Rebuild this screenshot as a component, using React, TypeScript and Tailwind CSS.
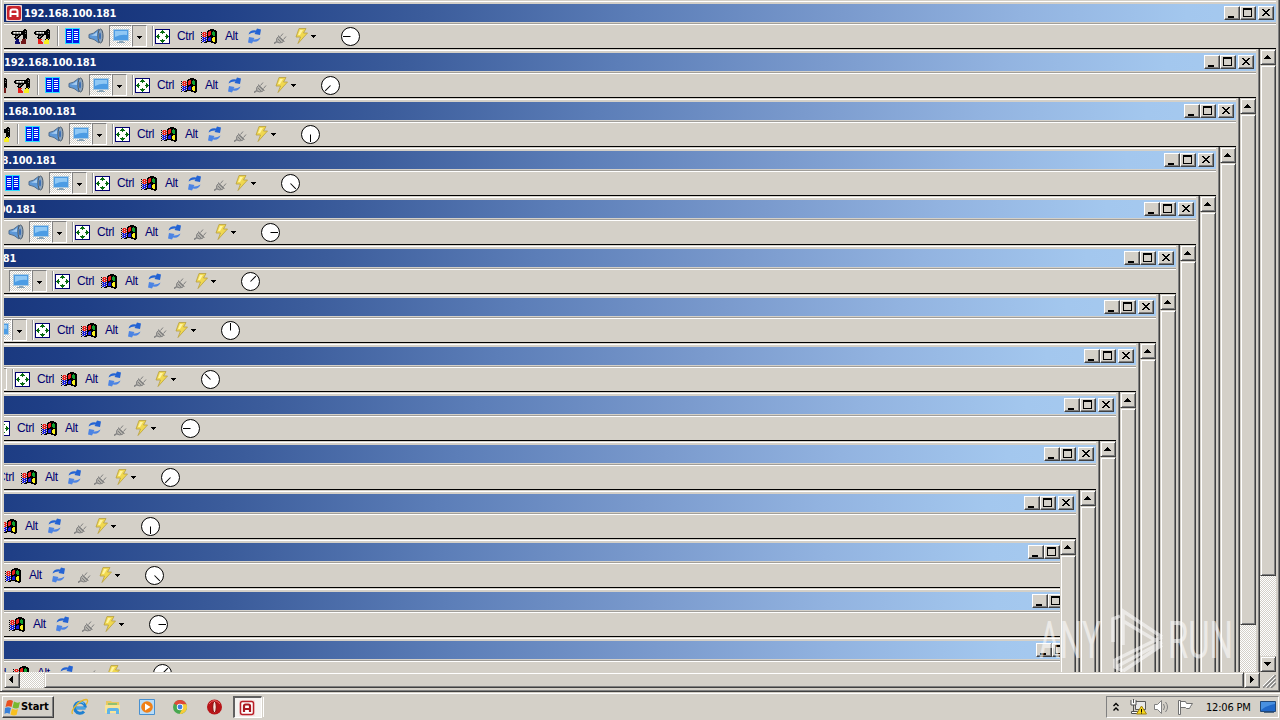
import type { ReactNode } from 'react';
import clsx from 'clsx';

const LAST_LEVEL = 13;
// how far each nested session is scrolled to the left
const SHIFTS = [0, 20, 40, 60, 80, 100, 120, 140, 160, 180, 200, 196, 192, 188];

const RAISED = 'bg-[#d4d0c8] border border-t-white border-l-white border-r-[#404040] border-b-[#404040] shadow-[inset_-1px_-1px_0_#808080]';
const SCROLL_RAISED = 'bg-[#d4d0c8] border border-t-[#d4d0c8] border-l-[#d4d0c8] border-r-[#404040] border-b-[#404040] shadow-[inset_1px_1px_0_#fff,inset_-1px_-1px_0_#808080]';
const DITHER = 'bg-[repeating-conic-gradient(#fff_0_25%,#d4d0c8_0_50%)] bg-[length:2px_2px]';

const PALETTE: Record<string, string> = {
  k: '#000000',
  g: '#808080',
  s: '#b8b8b0',
  w: '#ffffff',
  r: '#e8201c',
  m: '#701818',
  b: '#1418d8',
  n: '#101070',
  y: '#f8f020',
  G: '#10a030',
};

function Pixels({ rows, className }: { rows: string[]; className?: string }) {
  return (
    <svg width={rows[0].length} height={rows.length} shapeRendering="crispEdges" className={clsx('shrink-0', className)}>
      {rows.map((row, y) =>
        row.split('').map((c, x) =>
          c === '.' ? null : <rect key={`${x}-${y}`} x={x} y={y} width="1" height="1" fill={PALETTE[c]} />
        )
      )}
    </svg>
  );
}

const DRILL = [
  '.............kk.',
  '............kkkk',
  '.kkkkkkkkkkkkkgk',
  'kkswsswsswkkkkkk',
  'kkgsggsggskkkkgk',
  '.kkkkkkkkkkkkkkk',
  '....kkkgkk..kkkk',
  '....kggkk...kkkk',
  '...kkgkk....kkkk',
  '....kkk.....kkgk',
];

const DRILL_A = [...DRILL, '....nnnn...mmmm.', '.....nnn...mmmm.', '....nnnn..mmmmm.', '....nnnnn.mmmmm.', '....nnnnn.mmmmm.'];
const DRILL_B = [...DRILL, '....rrrr...kyyk.', '....rrr....yyyy.', '....rrrr..yyyyy.', '....rrrrr.yyyyy.', '....rrrrr.yyyyy.'];

const FLAG = [
  '.........kkkk...',
  '.......kkkkkkkk.',
  '......kkrrkkGkkk',
  'k.rrr.krrrkGGGkk',
  '.rr.rrkrrrkGGGkk',
  'k.rrr.krrrkGGGkk',
  '.rr.rrkrrkkkGGkk',
  'k.rrr.kkkkkkkkkk',
  '.bb.bbkkbbkkyykk',
  'k.bbb.kbbbkyyykk',
  '.bb.bbkbbbkyyykk',
  'k.bbb.kbbbkyyykk',
  '.bb.bkkkkkkkyykk',
  'k..kkk....kkkkkk',
  '.............kk.',
];

function DocsIcon() {
  return (
    <svg width="15" height="16" shapeRendering="crispEdges" className="shrink-0">
      <path fill="#2adcff" d="M0 0h15v16H0z" />
      <path fill="#0018e8" d="M1 1h6v14H1zM8 1h6v14H8z" />
      <path fill="#fff" d="M2 3h4v1H2zM2 5h4v1H2zM2 7h4v1H2zM2 9h4v1H2zM2 11h4v1H2zM9 3h4v1H9zM9 5h4v1H9zM9 7h4v1H9zM9 9h4v1H9zM9 11h4v1H9z" />
    </svg>
  );
}

function SpeakerIcon() {
  return (
    <svg width="16" height="16" className="shrink-0">
      <path d="M1 6.500Q5 6.500 11 1v14Q6 10.500 1 10z" fill="#5c98d8" stroke="#506c8c" />
      <path d="M3 7.500Q6 7 9 4v4z" fill="#a8cdf0" />
      <ellipse cx="12.500" cy="8" rx="2.500" ry="7" fill="#90a8c0" stroke="#485868" />
      <ellipse cx="12" cy="8" rx="1" ry="3.500" fill="#3a70b8" />
    </svg>
  );
}

function MonitorIcon() {
  return (
    <svg width="16" height="14">
      <rect x=".5" y=".5" width="15" height="11" fill="#4c9ce4" stroke="#a8c8e0" />
      <path d="M2 2h12v4Q8 5 2 8z" fill="#90c8f4" />
      <path d="M6 12h4v1H6zM4 13h8v1H4z" fill="#88a4b8" />
    </svg>
  );
}

function MoveIcon() {
  return (
    <svg width="15" height="15" shapeRendering="crispEdges" className="shrink-0">
      <path fill="#000070" d="M0 0h15v15H0z" />
      <path fill="#fff" d="M1 1h13v13H1z" />
      <path fill="#086c10" d="M7 1h1v4H7zM6 2h3v1H6zM5 3h5v1H5zM7 10h1v4H7zM5 11h5v1H5zM6 12h3v1H6zM1 7h4v1H1zM2 6h1v3H2zM3 5h1v5H3zM10 7h4v1h-4zM12 6h1v3h-1zM11 5h1v5h-1z" />
    </svg>
  );
}

function RefreshIcon() {
  return (
    <svg width="13" height="16" className="shrink-0">
      <path d="M.5 6.500Q2 1.500 8 2.500L9 .5 13 1.500 12 7 6.500 6 7.500 4.500Q4 4 .5 6.500z" fill="#2464d4" />
      <path d="M12.500 9.500Q11 14.500 5 13.500L4 15.500 0 14.500 1 9 6.500 10 5.500 11.500Q9 12 12.500 9.500z" fill="#4c84e4" />
    </svg>
  );
}

function PlugIcon() {
  return (
    <svg width="13" height="12" className="shrink-0" fill="none" stroke="#808080">
      <path d="M0 11.500l3-2" strokeWidth="1.500" />
      <path d="M3 6l1.500-1.500 5 5-1.500 1q-3 1-5-.5-1-2 0-4z" fill="#b4b2ac" />
      <path d="m4 3.500 6.500 6M6.500 4.500 9 1.500M9.500 7.500l2.500-3M4 7l3 3" />
    </svg>
  );
}

function BoltIcon() {
  return (
    <svg width="13" height="16" className="shrink-0">
      <path d="M4 .5h7L8.500 5h4L3 15.500 5.500 9H1z" fill="#f0d850" stroke="#b8a040" strokeWidth=".8" />
      <path d="M5 2h3L5 7H3z" fill="#fff4a0" />
    </svg>
  );
}

function DownArrow() {
  return (
    <svg width="5" height="3" shapeRendering="crispEdges" className="shrink-0">
      <path d="M0 0h5v1H0zM1 1h3v1H1zM2 2h1v1H2z" />
    </svg>
  );
}

function Dial({ angle }: { angle: number }) {
  return (
    <svg width="19" height="19" viewBox="0 0 19 19" className="shrink-0">
      <circle cx="9.500" cy="9.500" r="9" fill="#fff" stroke="#000" />
      <path d="M9.500 9.500v-7.500" stroke="#000" transform={`rotate(${angle} 9.5 9.5)`} />
    </svg>
  );
}

function LogoA() {
  return (
    <svg width="16" height="16" viewBox="0 0 16 16" className="shrink-0">
      <rect width="16" height="16" rx="1" fill="#f4dcdc" />
      <rect x="1.500" y="1.500" width="13" height="13" rx="2" fill="#fff" stroke="#b82028" strokeWidth="1.500" />
      <path d="M5 12V6q0-1.500 1.500-1.500h3Q11 4.500 11 6v6M5 9h6" fill="none" stroke="#a81820" strokeWidth="2.200" />
    </svg>
  );
}

function TitleLogo() {
  return (
    <svg width="16" height="16" viewBox="0 0 16 16" className="shrink-0">
      <rect width="16" height="16" rx="1" fill="#f0d4d4" />
      <rect x="1" y="1" width="14" height="14" rx="2" fill="#c8242c" />
      <path d="M4.500 12V6.500Q4.500 4.500 6.500 4.500h3q2 0 2 2V12M5 9h6" fill="none" stroke="#fff" strokeWidth="2" />
    </svg>
  );
}

function Separator({ className }: { className?: string }) {
  return <div className={clsx('h-[20px] w-[2px] shrink-0 border-l border-l-[#909090] bg-white', className)} />;
}

function Toolbar({ angle }: { angle: number }) {
  return (
    <div className="flex h-[23px] items-center pb-px pl-[7px] font-['Liberation_Sans',sans-serif] text-[12px] leading-none tracking-[-0.4px] text-[#000070]">
      <Pixels rows={DRILL_A} />
      <Pixels rows={DRILL_B} className="ml-[7px]" />
      <Separator className="ml-[7px]" />
      <div className="ml-[6px] flex"><DocsIcon /></div>
      <div className="ml-[8px] flex"><SpeakerIcon /></div>
      <div className={clsx('ml-[5px] flex h-[22px] w-[23px] shrink-0 items-center justify-center border border-t-[#808080] border-l-[#808080] border-r-white border-b-white', DITHER)}>
        <MonitorIcon />
      </div>
      <div className="flex h-[22px] w-[15px] shrink-0 items-center justify-center border border-t-[#808080] border-l-[#808080] border-r-white border-b-white pt-[3px]">
        <DownArrow />
      </div>
      <Separator className="ml-[5px]" />
      <div className="ml-px flex"><MoveIcon /></div>
      <span className="ml-[7px] w-[24px] shrink-0">Ctrl</span>
      <Pixels rows={FLAG} />
      <span className="ml-[8px] w-[23px] shrink-0">Alt</span>
      <RefreshIcon />
      <div className="ml-[13px] flex pt-[3px]"><PlugIcon /></div>
      <div className="ml-[8px] flex"><BoltIcon /></div>
      <div className="ml-[3px] flex pt-px"><DownArrow /></div>
      <div className="ml-[25px] flex pt-px"><Dial angle={angle} /></div>
    </div>
  );
}

function CaptionButton({ children, className }: { children: ReactNode; className?: string }) {
  return (
    <button className={clsx('h-[14px] w-[16px] shrink-0', RAISED, className)}>
      <svg width="14" height="12" shapeRendering="crispEdges">{children}</svg>
    </button>
  );
}

function TitleBar() {
  return (
    <div className="flex h-[18px] items-center bg-[linear-gradient(90deg,#102c72_0%,#1f3f86_16%,#3b5c9b_33%,#5c7eb8_50%,#7a9acd_66%,#92b3e0_80%,#a3c7ee_93%,#a6caf0_100%)] pr-[2px] pl-[2px]">
      <TitleLogo />
      <span className="ml-[2px] flex-1 font-['DejaVu_Sans_Condensed','DejaVu_Sans',sans-serif] text-[11px] leading-none font-bold tracking-[-0.1px] text-white [font-stretch:condensed]">
        192.168.100.181
      </span>
      <CaptionButton><path d="M3 9h6v2H3z" /></CaptionButton>
      <CaptionButton><path fillRule="evenodd" d="M2 1h9v9H2zM3 3v6h7V3z" /></CaptionButton>
      <CaptionButton className="ml-[2px]">
        <path d="M3 2h2v1H3zM4 3h2v1H4zM5 4h4v1H5zM6 5h2v1H6zM5 6h4v1H5zM4 7h2v1H4zM3 8h2v1H3zM9 2h2v1H9zM8 3h2v1H8zM8 7h2v1H8zM9 8h2v1H9z" />
      </CaptionButton>
    </div>
  );
}

function ScrollButton({ d }: { d: string }) {
  return (
    <button className={clsx('h-[16px] w-[16px] shrink-0', SCROLL_RAISED)}>
      <svg width="14" height="14" shapeRendering="crispEdges"><path d={d} /></svg>
    </button>
  );
}

const UP = 'M6 5h1v1H6zM5 6h3v1H5zM4 7h5v1H4zM3 8h7v1H3z';
const DOWN = 'M3 5h7v1H3zM4 6h5v1H4zM5 7h3v1H5zM6 8h1v1H6z';
const LEFT = 'M4 6h1v1H4zM5 5h1v3H5zM6 4h1v5H6zM7 3h1v7H7z';
const RIGHT = 'M5 3h1v7H5zM6 4h1v5H6zM7 5h1v3H7zM8 6h1v1H8z';

function VerticalScroll({ level }: { level: number }) {
  return (
    <div className={clsx('flex w-[16px] shrink-0 flex-col overflow-hidden', DITHER)}>
      <ScrollButton d={UP} />
      <div className={clsx('shrink-0', SCROLL_RAISED, level > 1 ? 'h-[700px]' : 'h-[511px]')} />
      {level === 0 && <div className="mt-auto flex"><ScrollButton d={DOWN} /></div>}
    </div>
  );
}

function RemoteWindow({ level }: { level: number }) {
  const shift = SHIFTS[level];
  return (
    <div className="flex h-full shrink-0" style={{ width: 1276 - shift }}>
      <div className="flex min-w-0 flex-1 flex-col">
        <div className="h-[49px] w-[1272px] shrink-0 border-b border-b-black" style={{ marginLeft: -shift }}>
          <div className="h-[4px] border-t border-t-[#d4d0c8] shadow-[inset_0_1px_0_#fff]" />
          <TitleBar />
          <div className="mt-px h-px bg-[#a09e9a]" />
          <div className="h-px bg-white" />
          <Toolbar angle={270 - 45 * level} />
        </div>
        <div className="flex min-h-0 flex-1">
          <div className="min-w-0 flex-1 overflow-hidden">
            {level < LAST_LEVEL && <RemoteWindow level={level + 1} />}
          </div>
          {level <= 10 && <VerticalScroll level={level} />}
        </div>
      </div>
      <div className="w-[4px] shrink-0 border-r border-r-[#404040] bg-[#d4d0c8] shadow-[inset_-1px_0_0_#808080]" />
    </div>
  );
}

function HorizontalScroll() {
  return (
    <div className={clsx('flex h-[16px] w-[1256px]', DITHER)}>
      <ScrollButton d={LEFT} />
      <div className={clsx('ml-[24px] h-[16px] flex-1', SCROLL_RAISED)} />
      <ScrollButton d={RIGHT} />
    </div>
  );
}

function Watermark() {
  return (
    <svg className="pointer-events-none absolute top-[604px] left-[1034px]" width="200" height="72" fill="none" opacity=".55">
      <g fill="#fff" fontFamily="Roboto, sans-serif" fontWeight="400" fontSize="51">
        <text x="5" y="54" textLength="62" lengthAdjust="spacingAndGlyphs">ANY</text>
        <text x="134" y="54" textLength="65" lengthAdjust="spacingAndGlyphs">RUN</text>
      </g>
      <g stroke="#fff" strokeWidth="3.500">
        <path d="M79 38V15l7-3M89 41V7l39 26M89 17l37 22" />
        <path d="M81 56l47-23M82 63l46-25M89 67l39-26M81 55v8l8 4" />
      </g>
    </svg>
  );
}

function WindowsOrb() {
  return (
    <svg width="17" height="17" viewBox="0 0 17 17" className="shrink-0">
      <path d="M3 2q3-2 6 0L7.500 8q-3-1.500-6 0z" fill="#e85020" />
      <path d="M10 2.500q3 2 6 .5L14.500 9q-3 1-6-.5z" fill="#78b830" />
      <path d="M1 9q3-1.500 6 0l-1.500 6q-2.500-2-5 0z" fill="#3880d8" />
      <path d="M8 9.500q3 2 6 .5l-1.500 6q-3 1-6-.5z" fill="#f8c020" />
    </svg>
  );
}

function IeIcon() {
  return (
    <svg width="18" height="18" viewBox="0 0 18 18">
      <path d="M14.500 10H5M14.500 9.500a5.500 5.500 0 1 0-1.500 4" fill="none" stroke="#2080d0" strokeWidth="3" />
      <path d="M14 10H5M13 5.500Q9 2 5.500 6" stroke="#70c8f4" fill="none" />
      <path d="M1.500 16C-1 12 9 2 15 1.500c3 0 1 4 0 5" fill="none" stroke="#e8b828" strokeWidth="1.300" />
    </svg>
  );
}

function FolderIcon() {
  return (
    <svg width="16" height="16">
      <path d="M1 2h5l1 1h7v11H1z" fill="#e8c860" />
      <path d="M3 4h9v2H3z" fill="#90c070" />
      <path d="M0 6h15v8H0z" fill="#f8e498" />
      <path d="M2 15v-4q0-2 2-2h8q2 0 2 2v4h-3v-3H5v3z" fill="#60b4e8" />
    </svg>
  );
}

function PlayerIcon() {
  return (
    <svg width="16" height="16">
      <path d="M.5.5h15v15H.5z" fill="#b8dcf8" stroke="#4890d0" />
      <circle cx="8" cy="8" r="5.800" fill="#f08018" />
      <path d="M6 4.500v7L11.500 8z" fill="#fff" />
    </svg>
  );
}

function ChromeIcon() {
  return (
    <svg width="14" height="14" viewBox="0 0 14 14">
      <circle cx="7" cy="7" r="7" fill="#48a850" />
      <path d="M7 7 .9 3.500A7 7 0 0 1 13.100 3.500L13.500 4.500H7z" fill="#e04838" />
      <path d="M7 4.200h6.400A7 7 0 0 1 6.500 14L9.500 8.500z" fill="#f8cc38" />
      <circle cx="7" cy="7" r="3.200" fill="#fff" />
      <circle cx="7" cy="7" r="2.400" fill="#4080e0" />
    </svg>
  );
}

function OperaIcon() {
  return (
    <svg width="15" height="16">
      <ellipse cx="7.500" cy="8" rx="7.500" ry="7.500" fill="#b81418" />
      <path d="M2 5q5-7 11 0" stroke="#e86060" fill="none" />
      <ellipse cx="7.500" cy="8" rx="1.800" ry="5.500" fill="#f8e0d8" stroke="#800808" />
    </svg>
  );
}

function TrayIcons() {
  return (
    <>
      <svg width="8" height="11" className="shrink-0" fill="none" stroke="#000" strokeWidth="1.400">
        <path d="m1.500 4 2.500-2.500L6.500 4M1.500 8.500 4 6l2.500 2.500" />
      </svg>
      <svg width="17" height="16" className="ml-[10px] shrink-0">
        <path d="M5.500 2.500h10v8h-10z" fill="#e8e8e8" stroke="#585858" />
        <path d="M1 1v5h5V1M3.500 0v4M3.500 6v6M1.500 12.500h6v2h-6z" fill="#fff" stroke="#505050" />
        <path d="M11.500 7 16.500 15h-10z" fill="#f8d818" stroke="#a08010" />
        <path d="M11 10h1v3h-1zM11 13.500h1v1h-1z" />
      </svg>
      <svg width="17" height="16" className="ml-[6px] shrink-0" fill="none" stroke="#808080">
        <path d="M1.500 5.500h3l4-4v13l-4-4h-3z" fill="#fff" />
        <path d="M10.500 5q2 3 0 6M12.500 3q4 5 0 10" />
      </svg>
      <svg width="17" height="16" className="ml-[7px] shrink-0" stroke="#707070" fill="#fff">
        <path d="M1.500 1.500h2v14h-2zM3.500 2.500h5l1 2h6l-2 3-1 2h-3l-1-1h-5z" />
      </svg>
    </>
  );
}

function Taskbar() {
  return (
    <div className="flex h-[28px] items-center border-t border-t-[#d4d0c8] pt-px shadow-[inset_0_1px_0_#fff]">
      <button className={clsx("ml-[2px] flex h-[22px] w-[52px] items-center pl-px font-['DejaVu_Sans_Condensed','DejaVu_Sans',sans-serif] text-[11px] font-bold tracking-[-0.1px] [font-stretch:condensed]", RAISED)}>
        <WindowsOrb />
        Start
      </button>
      <div className="ml-[17px] flex items-center">
        <IeIcon />
        <div className="ml-[16px]"><FolderIcon /></div>
        <div className="ml-[18px]"><PlayerIcon /></div>
        <div className="ml-[18px]"><ChromeIcon /></div>
        <div className="ml-[20px]"><OperaIcon /></div>
      </div>
      <div className="ml-[11px] flex h-[22px] w-[29px] items-center justify-center border-t-2 border-r border-b border-l-2 border-t-[#606060] border-r-white border-b-white border-l-[#606060] bg-[#f4f2f0] pr-[2px]">
        <LogoA />
      </div>
      <div className="ml-px h-[20px] w-px bg-white" />
      <div className="ml-auto flex h-[22px] w-[173px] items-center border border-t-[#808080] border-r-white border-b-white border-l-[#808080] pl-[5px]">
        <TrayIcons />
        <span className="ml-[12px] w-[54px] shrink-0 font-['DejaVu_Sans_Condensed','DejaVu_Sans',sans-serif] text-[11px] leading-none tracking-[-0.2px] whitespace-nowrap [font-stretch:condensed]">
          12:06 PM
        </span>
        <svg width="16" height="14" className="shrink-0">
          <path d="M.5 1.500h15v10H.5z" fill="#2068c8" stroke="#204878" />
          <path d="M1 2h14v2Q8 5 1 10z" fill="#4890e0" />
          <path d="M4 12h10v1H4z" fill="#506880" />
        </svg>
      </div>
      <div className="w-px" />
    </div>
  );
}

export default function App() {
  return (
    <div className="relative h-[720px] w-[1280px] overflow-hidden bg-[#d4d0c8] text-black">
      <div className="flex h-[692px] flex-col border-b border-b-[#404040] pl-[4px] shadow-[inset_1px_0_0_#d4d0c8,inset_2px_0_0_#fff,inset_0_-1px_0_#808080]">
        <div className="h-[672px] shrink-0">
          <RemoteWindow level={0} />
        </div>
        <div className="flex h-[19px]">
          <HorizontalScroll />
          <div className="flex h-[16px] w-[16px] items-end justify-end">
            <svg width="13" height="13">
              <path d="M0 13 13 0M4 13l9-9M8 13l5-5" stroke="#808080" strokeWidth="1.500" />
              <path d="M-1 12 12-1M3 12l9-9M7 12l5-5" stroke="#fff" />
            </svg>
          </div>
          <div className="h-[19px] w-[4px] border-r border-r-[#404040] shadow-[inset_-1px_0_0_#808080]" />
        </div>
      </div>
      <Taskbar />
      <Watermark />
    </div>
  );
}
